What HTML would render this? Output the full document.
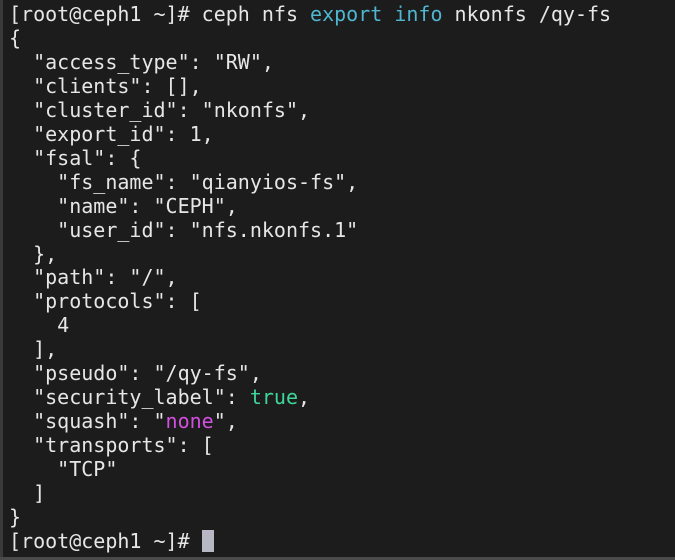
<!DOCTYPE html>
<html><head><style>
html,body{margin:0;padding:0;}
body{width:675px;height:560px;background:#1c1c1c;overflow:hidden;position:relative;}
.l{position:absolute;left:0;top:0;width:3px;height:560px;background:#3a3a3a;}
.b{position:absolute;left:0;top:557px;width:675px;height:3px;background:#4a4a4a;}
pre{margin:0;position:absolute;left:9px;top:3px;font-family:"DejaVu Sans Mono","Liberation Mono",monospace;font-size:20px;line-height:23.95px;color:#e6e6e6;}
.c{color:#4fb6d0}.g{color:#3fd69a}.m{color:#d24fe0}
.cur{display:inline-block;width:12px;height:22px;background:#b8b8c4;vertical-align:-4px;}
</style></head><body>
<div class="l"></div><div class="b"></div>
<pre>[root@ceph1 ~]# ceph nfs <span class="c">export</span> <span class="c">info</span> nkonfs /qy-fs
{
  "access_type": "RW",
  "clients": [],
  "cluster_id": "nkonfs",
  "export_id": 1,
  "fsal": {
    "fs_name": "qianyios-fs",
    "name": "CEPH",
    "user_id": "nfs.nkonfs.1"
  },
  "path": "/",
  "protocols": [
    4
  ],
  "pseudo": "/qy-fs",
  "security_label": <span class="g">true</span>,
  "squash": "<span class="m">none</span>",
  "transports": [
    "TCP"
  ]
}
[root@ceph1 ~]# <span class="cur"></span></pre>
</body></html>
